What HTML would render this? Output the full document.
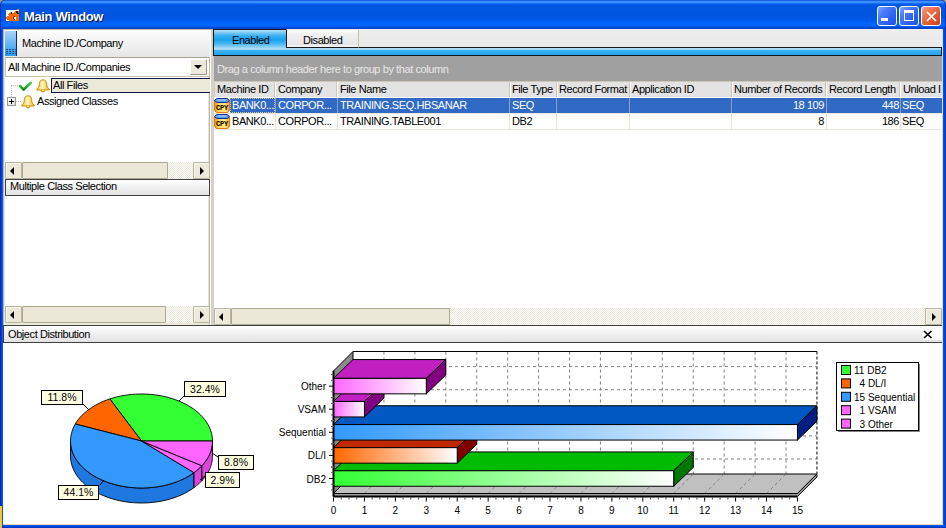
<!DOCTYPE html>
<html><head><meta charset="utf-8">
<style>
*{box-sizing:border-box;margin:0;padding:0}
html,body{width:946px;height:528px;overflow:hidden;background:#0050E0;font-family:"Liberation Sans",sans-serif;font-size:11px;color:#000}
.a{position:absolute}
.t{position:absolute;white-space:nowrap;letter-spacing:-0.42px;line-height:13px}
.sbb{position:absolute;top:0;width:17px;height:17px;background:#ECE9D8;border:1px solid #B9B49E;border-radius:1px;box-shadow:inset 1px 1px 0 #F8F6EE}
.hatch{position:absolute;top:0;height:17px;background:repeating-conic-gradient(#FDFDFA 0 25%,#EAE8DD 0 50%) 0 0/2px 2px}
.thumb{position:absolute;top:0;height:17px;background:#EBE8D8;border:1px solid #ADA890;border-radius:1px}
.tl{position:absolute;width:0;height:0;border-top:4px solid transparent;border-bottom:4px solid transparent;border-right:4px solid #000}
.tr{position:absolute;width:0;height:0;border-top:4px solid transparent;border-bottom:4px solid transparent;border-left:4px solid #000}
.hdr{position:absolute;background:linear-gradient(#FFFFFF,#F3F3F3 40%,#E2E2E2);border:1px solid #404040}
.col{position:absolute;top:0;height:15px;width:2px;border-left:1px solid #C9C7BA;border-right:1px solid #fff}
.grid{position:absolute;width:1px;background:rgba(215,208,175,0.55)}
.wb{position:absolute;top:6px;width:21px;height:21px;border:1px solid #fff;border-radius:3px}
</style></head><body>
<!-- ============ TITLE BAR ============ -->
<div class="a" style="left:0;top:0;width:946px;height:6px;background:#A39A7C"></div>
<div class="a" style="left:0;top:0;width:946px;height:29px;border-radius:5px 5px 0 0;box-shadow:inset 1px 0 #0030C0,inset -1px 0 #0030C0;background:linear-gradient(#0A3FD0 0px,#2E7EF8 1px,#3E9AFF 1.8px,#3A92FF 2.5px,#0A64F0 3.8px,#0056E2 5px,#0055E0 16px,#005AEA 20px,#0064FC 23px,#0066FF 26px,#0050E0 27px,#003CC8 29px)"></div>

<!-- icon -->
<svg class="a" style="left:6px;top:9px" width="13" height="12" viewBox="0 0 13 12" shape-rendering="crispEdges"><rect x="0" y="1" width="13" height="11" fill="#fff"/><rect x="11" y="0" width="2" height="1" fill="#FF7A20"/><rect x="9" y="2" width="1" height="1" fill="#FF6A00"/><rect x="10" y="2" width="1" height="1" fill="#1A1A1A"/><rect x="11" y="2" width="1" height="1" fill="#1A1A1A"/><rect x="12" y="2" width="1" height="1" fill="#FF6A00"/><rect x="4" y="3" width="1" height="1" fill="#FF6A00"/><rect x="5" y="3" width="1" height="1" fill="#1A1A1A"/><rect x="8" y="3" width="1" height="1" fill="#FF6A00"/><rect x="9" y="3" width="1" height="1" fill="#FF6A00"/><rect x="10" y="3" width="1" height="1" fill="#1A1A1A"/><rect x="11" y="3" width="1" height="1" fill="#1A1A1A"/><rect x="12" y="3" width="1" height="1" fill="#FF6A00"/><rect x="3" y="4" width="1" height="1" fill="#FF6A00"/><rect x="4" y="4" width="1" height="1" fill="#FF6A00"/><rect x="5" y="4" width="1" height="1" fill="#1A1A1A"/><rect x="6" y="4" width="1" height="1" fill="#FF6A00"/><rect x="7" y="4" width="1" height="1" fill="#FF6A00"/><rect x="8" y="4" width="1" height="1" fill="#FF6A00"/><rect x="9" y="4" width="1" height="1" fill="#FF6A00"/><rect x="10" y="4" width="1" height="1" fill="#FF6A00"/><rect x="11" y="4" width="1" height="1" fill="#1A1A1A"/><rect x="12" y="4" width="1" height="1" fill="#1A1A1A"/><rect x="2" y="5" width="1" height="1" fill="#FF6A00"/><rect x="3" y="5" width="1" height="1" fill="#FF6A00"/><rect x="4" y="5" width="1" height="1" fill="#FF6A00"/><rect x="5" y="5" width="1" height="1" fill="#FF6A00"/><rect x="6" y="5" width="1" height="1" fill="#FF6A00"/><rect x="7" y="5" width="1" height="1" fill="#FF6A00"/><rect x="8" y="5" width="1" height="1" fill="#FF6A00"/><rect x="9" y="5" width="1" height="1" fill="#FF6A00"/><rect x="10" y="5" width="1" height="1" fill="#FF6A00"/><rect x="11" y="5" width="1" height="1" fill="#FF6A00"/><rect x="12" y="5" width="1" height="1" fill="#FF6A00"/><rect x="3" y="6" width="1" height="1" fill="#FF6A00"/><rect x="4" y="6" width="1" height="1" fill="#FF6A00"/><rect x="5" y="6" width="1" height="1" fill="#FF6A00"/><rect x="6" y="6" width="1" height="1" fill="#FF6A00"/><rect x="7" y="6" width="1" height="1" fill="#FF6A00"/><rect x="8" y="6" width="1" height="1" fill="#FF6A00"/><rect x="9" y="6" width="1" height="1" fill="#FF6A00"/><rect x="10" y="6" width="1" height="1" fill="#FF6A00"/><rect x="11" y="6" width="1" height="1" fill="#FF6A00"/><rect x="12" y="6" width="1" height="1" fill="#FF6A00"/><rect x="1" y="7" width="1" height="1" fill="#FF6A00"/><rect x="2" y="7" width="1" height="1" fill="#FF6A00"/><rect x="3" y="7" width="1" height="1" fill="#FF6A00"/><rect x="4" y="7" width="1" height="1" fill="#FF6A00"/><rect x="5" y="7" width="1" height="1" fill="#FF6A00"/><rect x="6" y="7" width="1" height="1" fill="#FF6A00"/><rect x="7" y="7" width="1" height="1" fill="#FF6A00"/><rect x="8" y="7" width="1" height="1" fill="#1A1A1A"/><rect x="9" y="7" width="1" height="1" fill="#FF6A00"/><rect x="10" y="7" width="1" height="1" fill="#FF6A00"/><rect x="11" y="7" width="1" height="1" fill="#FF6A00"/><rect x="12" y="7" width="1" height="1" fill="#FF6A00"/><rect x="0" y="8" width="1" height="1" fill="#FF6A00"/><rect x="1" y="8" width="1" height="1" fill="#FF6A00"/><rect x="2" y="8" width="1" height="1" fill="#FF6A00"/><rect x="3" y="8" width="1" height="1" fill="#FF6A00"/><rect x="4" y="8" width="1" height="1" fill="#FF6A00"/><rect x="5" y="8" width="1" height="1" fill="#FF6A00"/><rect x="6" y="8" width="1" height="1" fill="#FF6A00"/><rect x="7" y="8" width="1" height="1" fill="#1A1A1A"/><rect x="10" y="8" width="1" height="1" fill="#FF6A00"/><rect x="11" y="8" width="1" height="1" fill="#FF6A00"/><rect x="12" y="8" width="1" height="1" fill="#FF6A00"/><rect x="0" y="9" width="1" height="1" fill="#FF6A00"/><rect x="1" y="9" width="1" height="1" fill="#FF6A00"/><rect x="2" y="9" width="1" height="1" fill="#FF6A00"/><rect x="3" y="9" width="1" height="1" fill="#FF6A00"/><rect x="4" y="9" width="1" height="1" fill="#FF6A00"/><rect x="5" y="9" width="1" height="1" fill="#FF6A00"/><rect x="6" y="9" width="1" height="1" fill="#FF6A00"/><rect x="7" y="9" width="1" height="1" fill="#1A1A1A"/><rect x="10" y="9" width="1" height="1" fill="#FF6A00"/><rect x="11" y="9" width="1" height="1" fill="#FF6A00"/><rect x="12" y="9" width="1" height="1" fill="#FF6A00"/><rect x="1" y="10" width="1" height="1" fill="#FF6A00"/><rect x="2" y="10" width="1" height="1" fill="#FF6A00"/><rect x="3" y="10" width="1" height="1" fill="#FF6A00"/><rect x="4" y="10" width="1" height="1" fill="#FF6A00"/><rect x="5" y="10" width="1" height="1" fill="#FF6A00"/><rect x="6" y="10" width="1" height="1" fill="#FF6A00"/><rect x="7" y="10" width="1" height="1" fill="#FF6A00"/><rect x="8" y="10" width="1" height="1" fill="#1A1A1A"/><rect x="10" y="10" width="1" height="1" fill="#FF6A00"/><rect x="11" y="10" width="1" height="1" fill="#FF6A00"/><rect x="12" y="10" width="1" height="1" fill="#FF6A00"/><rect x="3" y="11" width="1" height="1" fill="#FF6A00"/><rect x="4" y="11" width="1" height="1" fill="#FF6A00"/><rect x="5" y="11" width="1" height="1" fill="#FF6A00"/><rect x="6" y="11" width="1" height="1" fill="#FF6A00"/><rect x="7" y="11" width="1" height="1" fill="#FF6A00"/><rect x="8" y="11" width="1" height="1" fill="#FF6A00"/><rect x="9" y="11" width="1" height="1" fill="#FF6A00"/><rect x="10" y="11" width="1" height="1" fill="#FF6A00"/><rect x="11" y="11" width="1" height="1" fill="#FF6A00"/><rect x="12" y="11" width="1" height="1" fill="#FF6A00"/></svg>
<div class="t" style="left:24px;top:8px;font-weight:bold;font-size:13px;letter-spacing:-0.35px;color:#000A40;line-height:15px;left:25px;top:10px">Main Window</div>
<div class="t" style="left:24px;top:8px;font-weight:bold;font-size:13px;letter-spacing:-0.35px;color:#fff;line-height:15px;top:9px">Main Window</div>
<!-- window buttons -->
<div class="wb" style="left:877px;width:20px;height:20px;background:linear-gradient(135deg,#7FA6FF 0,#4A7CF8 30%,#2E62F0 65%,#2254E0 100%)"><div class="a" style="left:3px;top:11px;width:7px;height:3px;background:#fff"></div></div>
<div class="wb" style="left:899px;width:20px;height:20px;background:linear-gradient(135deg,#7FA6FF 0,#4A7CF8 30%,#2E62F0 65%,#2254E0 100%)"><div class="a" style="left:4px;top:3px;width:10px;height:11px;border:1px solid #fff;border-top-width:3px"></div></div>
<div class="wb" style="left:921px;width:20px;height:20px;background:linear-gradient(135deg,#F4A080 0,#EC7A56 30%,#E2582E 65%,#CC4010 100%)">
<svg class="a" style="left:4px;top:4px" width="11" height="11" viewBox="0 0 11 11"><path d="M1 1 L10 10 M10 1 L1 10" stroke="#fff" stroke-width="1.7"/></svg></div>

<!-- ============ FRAME ============ -->
<div class="a" style="left:0;top:29px;width:946px;height:499px;background:linear-gradient(90deg,#0020B0 0,#0030C8 1px,#0060FF 2.5px,#0058F4 6px,#0058F4 943px,#0050F0 944px,#0030C0 946px);"></div>
<div class="a" style="left:0;top:525px;width:946px;height:3px;background:linear-gradient(#0058F4 0,#0050EC 1px,#0030B8 3px)"></div>
<div class="a" style="left:3px;top:29px;width:940px;height:496px;background:#ECE9D8;border-top:1px solid #C5BA98;border-left:1px solid #C0B48F;border-right:1px solid #E8D8B0;border-bottom:1px solid #E8D8B0"></div>
<div class="a" style="left:0;top:506px;width:2px;height:22px;background:linear-gradient(90deg,#FFD030,#F0B820)"></div>

<!-- ============ LEFT PANEL ============ -->
<div class="a" style="left:208px;top:30px;width:1px;height:295px;background:#E6E4DA"></div><div class="a" style="left:209px;top:30px;width:1px;height:295px;background:#BDB9A5"></div><div class="a" style="left:210px;top:30px;width:1px;height:295px;background:#FFFEF4"></div><div class="a" style="left:211px;top:30px;width:3px;height:295px;background:#D4D1C8"></div><div class="a" style="left:214px;top:97px;width:1px;height:211px;background:#D0CEC8"></div>
<!-- header Machine ID./Company -->
<div class="a" style="left:5px;top:30px;width:205px;height:27px;background:linear-gradient(#FDFDFD,#F4F4F4 40%,#E6E6E6)"></div>
<div class="a" style="left:5px;top:31px;width:12px;height:25px;background:linear-gradient(#A9D3FA,#5AB2F4 60%,#2A9CF0);border-right:1px solid #1B2B4B"></div>
<div class="a" style="left:6px;top:49px;width:10px;height:1px;background:repeating-linear-gradient(90deg,#1E4A86 0 2px,transparent 2px 3px)"></div>
<div class="a" style="left:6px;top:51px;width:10px;height:1px;background:repeating-linear-gradient(90deg,#1E4A86 0 2px,transparent 2px 3px)"></div>
<div class="a" style="left:6px;top:53px;width:10px;height:1px;background:repeating-linear-gradient(90deg,#1E4A86 0 2px,transparent 2px 3px)"></div>
<div class="t" style="left:22px;top:37px">Machine ID./Company</div>
<!-- combo -->
<div class="a" style="left:5px;top:57px;width:204px;height:20px;background:#fff;border:1px solid #C9C3A8;border-top-color:#A5A18D;border-right:none"></div>
<div class="t" style="left:8px;top:61px">All Machine ID./Companies</div>
<div class="a" style="left:190px;top:59px;width:17px;height:16px;background:#ECE9D8;border:1px solid #fff;border-right-color:#9D9A87;border-bottom-color:#9D9A87"></div>
<div class="a" style="left:194px;top:65px;width:0;height:0;border-left:4px solid transparent;border-right:4px solid transparent;border-top:4px solid #000"></div>
<!-- tree area -->
<div class="a" style="left:5px;top:77px;width:203px;height:85px;background:#fff"></div>
<div class="a" style="left:51px;top:78px;width:159px;height:15px;background:#ECE9D8;border:1px solid #0B1A48;border-right:none"></div>
<div class="t" style="left:53px;top:79px">All Files</div>
<div class="t" style="left:37px;top:95px">Assigned Classes</div>
<!-- tree dotted lines -->
<div class="a" style="left:11px;top:85px;width:1px;height:12px;border-left:1px dotted #C0C0C0"></div>
<div class="a" style="left:11px;top:85px;width:7px;height:1px;border-top:1px dotted #C0C0C0"></div>
<div class="a" style="left:16px;top:101px;width:5px;height:1px;border-top:1px dotted #C0C0C0"></div>
<!-- plus box -->
<div class="a" style="left:7px;top:97px;width:9px;height:9px;border:1px solid #919B9C;background:linear-gradient(135deg,#fff,#E0DDD0)"></div>
<div class="a" style="left:9px;top:101px;width:5px;height:1px;background:#000"></div>
<div class="a" style="left:11px;top:99px;width:1px;height:5px;background:#000"></div>
<!-- check -->
<svg class="a" style="left:19px;top:82px" width="13" height="9" viewBox="0 0 13 9"><defs><linearGradient id="cg" x1="0" y1="0" x2="0" y2="1"><stop offset="0" stop-color="#40D040"/><stop offset="1" stop-color="#109010"/></linearGradient></defs><path d="M1.2 4.2 L4.6 7.6 L11.6 0.8" stroke="url(#cg)" stroke-width="2.6" fill="none" stroke-linecap="round"/></svg>
<!-- bells -->
<svg class="a" style="left:36px;top:79px" width="14" height="14" viewBox="0 0 14 14"><defs><linearGradient id="bg1" x1="0" x2="1"><stop offset="0" stop-color="#F4C22A"/><stop offset=".45" stop-color="#FFF6C0"/><stop offset="1" stop-color="#F0B818"/></linearGradient></defs><path d="M7 0.8 C4 0.8 3.4 3 3.3 5.5 C3.2 8 2.2 9 0.8 10 L0.8 11 L13.2 11 L13.2 10 C11.8 9 10.8 8 10.7 5.5 C10.6 3 10 0.8 7 0.8 Z" fill="url(#bg1)" stroke="#D08A00" stroke-width="1"/><path d="M5.3 11.3 A1.7 1.7 0 0 0 8.7 11.3" fill="#FFE060" stroke="#D08A00" stroke-width="1"/></svg>
<svg class="a" style="left:21px;top:95px" width="14" height="14" viewBox="0 0 14 14"><defs><linearGradient id="bg2" x1="0" x2="1"><stop offset="0" stop-color="#F4C22A"/><stop offset=".45" stop-color="#FFF6C0"/><stop offset="1" stop-color="#F0B818"/></linearGradient></defs><path d="M7 0.8 C4 0.8 3.4 3 3.3 5.5 C3.2 8 2.2 9 0.8 10 L0.8 11 L13.2 11 L13.2 10 C11.8 9 10.8 8 10.7 5.5 C10.6 3 10 0.8 7 0.8 Z" fill="url(#bg2)" stroke="#D08A00" stroke-width="1"/><path d="M5.3 11.3 A1.7 1.7 0 0 0 8.7 11.3" fill="#FFE060" stroke="#D08A00" stroke-width="1"/></svg>
<!-- scrollbar 1 -->
<div class="a" style="left:5px;top:162px;width:205px;height:17px">
 <div class="sbb" style="left:0"><div class="tl" style="left:4px;top:4px"></div></div>
 <div class="thumb" style="left:17px;width:146px"></div>
 <div class="hatch" style="left:163px;width:25px"></div>
 <div class="sbb" style="left:188px"><div class="tr" style="left:6px;top:4px"></div></div>
</div>
<!-- Multiple Class Selection header -->
<div class="hdr" style="left:5px;top:179px;width:205px;height:17px"></div>
<div class="t" style="left:10px;top:180px">Multiple Class Selection</div>
<div class="a" style="left:5px;top:196px;width:203px;height:110px;background:#fff"></div>
<!-- scrollbar 2 -->
<div class="a" style="left:5px;top:306px;width:205px;height:17px">
 <div class="sbb" style="left:0"><div class="tl" style="left:4px;top:4px"></div></div>
 <div class="thumb" style="left:17px;width:144px"></div>
 <div class="hatch" style="left:161px;width:27px"></div>
 <div class="sbb" style="left:188px"><div class="tr" style="left:6px;top:4px"></div></div>
</div>
<!-- splitter -->


<!-- ============ RIGHT PANEL ============ -->
<!-- tabs -->
<div class="a" style="left:214px;top:29px;width:728px;height:18px;background:linear-gradient(#F6F4EA 0,#F6F4EA 1px,#ECECEC 1px,#E9E9E9)"></div>
<div class="a" style="left:213px;top:29px;width:73px;height:19px;border-top:1px solid #1A1A1A;border-left:1px solid #1A1A1A;background:linear-gradient(#B2DEFA 0,#8CCFF7 2px,#35AEF0 6px,#1AA0EC 10px,#4DB8F2 14px,#8ACFF6 17px,#B8E0FA 19px)"></div>
<div class="a" style="left:286px;top:29px;width:73px;height:19px;background:linear-gradient(#FFFFFF,#F2F2F2 20%,#E6E6E6 85%,#FAFAFA);border-left:1px solid #1A1A1A;border-right:1px solid #C8C0A8;border-bottom:1px solid #1A1A1A;border-top:1px solid #F0ECDC"></div>
<div class="a" style="left:359px;top:47px;width:583px;height:1px;background:#1A1A1A"></div>
<div class="t" style="left:232px;top:34px">Enabled</div>
<div class="t" style="left:303px;top:34px">Disabled</div>
<div class="a" style="left:213px;top:48px;width:729px;height:8px;background:linear-gradient(#B8E0FA 0,#9AD6F8 1.5px,#3DB2F0 2.5px,#22A6EE 7px);border-bottom:1px solid #1A1A1A;border-left:1px solid #1A1A1A;border-right:1px solid #1A1A1A"></div>
<!-- group by area -->
<div class="a" style="left:214px;top:56px;width:728px;height:26px;background:#A0A0A0"></div>
<div class="t" style="left:217px;top:63px;color:#E8E8E8">Drag a column header here to group by that column</div>
<!-- column headers -->
<div class="a" style="left:214px;top:81px;width:728px;height:17px;background:#E3E3E3;border-top:1px solid #CFC8B0;border-bottom:1px solid #E0DAC8;border-left:1px solid #D4CEB8"></div>
<div class="a" style="left:214px;top:82px;width:728px;height:15px">
 <div class="col" style="left:60px"></div><div class="col" style="left:122px"></div><div class="col" style="left:295px"></div>
 <div class="col" style="left:342px"></div><div class="col" style="left:415px"></div><div class="col" style="left:517px"></div>
 <div class="col" style="left:611px"></div><div class="col" style="left:685px"></div>
</div>
<div class="t" style="left:217px;top:83px">Machine ID</div>
<div class="t" style="left:278px;top:83px">Company</div>
<div class="t" style="left:340px;top:83px">File Name</div>
<div class="t" style="left:512px;top:83px">File Type</div>
<div class="t" style="left:559px;top:83px">Record Format</div>
<div class="t" style="left:632px;top:83px">Application ID</div>
<div class="t" style="left:734px;top:83px">Number of Records</div>
<div class="t" style="left:829px;top:83px">Record Length</div>
<div class="t" style="left:903px;top:83px">Unload I</div>
<!-- rows -->
<div class="a" style="left:214px;top:97px;width:728px;height:211px;background:#fff"></div>
<div class="a" style="left:230px;top:98px;width:712px;height:15px;background:#316AC5"></div>
<div class="a" style="left:230px;top:98px;width:45px;height:15px;border:1px dotted #D7C98A"></div>
<div class="a" style="left:214px;top:129px;width:728px;height:1px;background:#EAE8DC"></div>
<div class="grid" style="left:275px;top:97px;height:33px"></div>
<div class="grid" style="left:337px;top:97px;height:33px"></div>
<div class="grid" style="left:509px;top:97px;height:33px"></div>
<div class="grid" style="left:556px;top:97px;height:33px"></div>
<div class="grid" style="left:629px;top:97px;height:33px"></div>
<div class="grid" style="left:731px;top:97px;height:33px"></div>
<div class="grid" style="left:826px;top:97px;height:33px"></div>
<div class="grid" style="left:900px;top:97px;height:33px"></div>
<div class="a" style="left:214px;top:113px;width:728px;height:1px;background:#EAE8DC"></div>
<div class="t" style="left:232px;top:99px;color:#fff">BANK0...</div>
<div class="t" style="left:278px;top:99px;color:#fff">CORPOR...</div>
<div class="t" style="left:340px;top:99px;color:#fff">TRAINING.SEQ.HBSANAR</div>
<div class="t" style="left:512px;top:99px;color:#fff">SEQ</div>
<div class="t" style="left:723px;width:101px;text-align:right;top:99px;color:#fff">18 109</div>
<div class="t" style="left:820px;width:79px;text-align:right;top:99px;color:#fff">448</div>
<div class="t" style="left:902px;top:99px;color:#fff">SEQ</div>
<div class="t" style="left:232px;top:115px">BANK0...</div>
<div class="t" style="left:278px;top:115px">CORPOR...</div>
<div class="t" style="left:340px;top:115px">TRAINING.TABLE001</div>
<div class="t" style="left:512px;top:115px">DB2</div>
<div class="t" style="left:723px;width:101px;text-align:right;top:115px">8</div>
<div class="t" style="left:820px;width:79px;text-align:right;top:115px">186</div>
<div class="t" style="left:902px;top:115px">SEQ</div>
<!-- CPY icons -->
<svg class="a" style="left:214px;top:98px" width="16" height="15" viewBox="0 0 17 15" preserveAspectRatio="none"><defs><linearGradient id="ic1" x1="0" x2="1"><stop offset="0" stop-color="#F08A10"/><stop offset=".3" stop-color="#FFD860"/><stop offset=".7" stop-color="#FFE890"/><stop offset="1" stop-color="#F09A20"/></linearGradient></defs><path d="M0.5 3 L0.5 12 L2.5 14.5 L14.5 14.5 L16.5 12 L16.5 3 Z" fill="url(#ic1)" stroke="#E07800" stroke-width="1"/><path d="M0.5 2.5 L3 0.5 L14 0.5 L16.5 2.5 L14 4.5 L3 4.5 Z" fill="#5A9AF4" stroke="#0A2A9A" stroke-width="1"/><path d="M4 2 L13 2" stroke="#A8D0FF" stroke-width="1.2"/><text x="8.5" y="11.6" font-size="7.5" font-weight="bold" text-anchor="middle" font-family="Liberation Mono" letter-spacing="-0.3">CPY</text></svg>
<svg class="a" style="left:214px;top:114px" width="16" height="15" viewBox="0 0 17 15" preserveAspectRatio="none"><defs><linearGradient id="ic2" x1="0" x2="1"><stop offset="0" stop-color="#F08A10"/><stop offset=".3" stop-color="#FFD860"/><stop offset=".7" stop-color="#FFE890"/><stop offset="1" stop-color="#F09A20"/></linearGradient></defs><path d="M0.5 3 L0.5 12 L2.5 14.5 L14.5 14.5 L16.5 12 L16.5 3 Z" fill="url(#ic2)" stroke="#E07800" stroke-width="1"/><path d="M0.5 2.5 L3 0.5 L14 0.5 L16.5 2.5 L14 4.5 L3 4.5 Z" fill="#5A9AF4" stroke="#0A2A9A" stroke-width="1"/><path d="M4 2 L13 2" stroke="#A8D0FF" stroke-width="1.2"/><text x="8.5" y="11.6" font-size="7.5" font-weight="bold" text-anchor="middle" font-family="Liberation Mono" letter-spacing="-0.3">CPY</text></svg>
<!-- right scrollbar -->
<div class="a" style="left:214px;top:308px;width:728px;height:17px">
 <div class="sbb" style="left:0"><div class="tl" style="left:4px;top:4px"></div></div>
 <div class="thumb" style="left:17px;width:219px"></div>
 <div class="hatch" style="left:236px;width:475px"></div>
 <div class="sbb" style="left:711px"><div class="tr" style="left:6px;top:4px"></div></div>
</div>

<!-- ============ OBJECT DISTRIBUTION ============ -->
<div class="hdr" style="left:3px;top:325px;width:939px;height:18px;border-right:none"></div>
<div class="t" style="left:8px;top:328px">Object Distribution</div>
<div class="a" style="left:923px;top:327px;width:19px;height:13px;background:#fff"></div>
<svg class="a" style="left:923px;top:330px" width="10" height="9" viewBox="0 0 10 9"><path d="M1 1 L8.5 8 M8.5 1 L1 8" stroke="#000" stroke-width="1.7"/></svg>
<div class="a" style="left:3px;top:343px;width:939px;height:181px;background:#fff"></div>
<!-- CHART -->
<svg class="a" style="left:0;top:0" width="946" height="528" viewBox="0 0 946 528"><defs><linearGradient id="g0" x1="0" y1="0" x2="1" y2="0"><stop offset="0" stop-color="#33FF33"/><stop offset="1" stop-color="#fff"/></linearGradient><linearGradient id="g1" x1="0" y1="0" x2="1" y2="0"><stop offset="0" stop-color="#FF6600"/><stop offset="1" stop-color="#fff"/></linearGradient><linearGradient id="g2" x1="0" y1="0" x2="1" y2="0"><stop offset="0" stop-color="#3399FF"/><stop offset="1" stop-color="#fff"/></linearGradient><linearGradient id="g3" x1="0" y1="0" x2="1" y2="0"><stop offset="0" stop-color="#FF66FF"/><stop offset="1" stop-color="#fff"/></linearGradient><linearGradient id="g4" x1="0" y1="0" x2="1" y2="0"><stop offset="0" stop-color="#FF66FF"/><stop offset="1" stop-color="#fff"/></linearGradient></defs><path d="M70.50,441.00 L70.63,443.82 L71.01,446.63 L71.65,449.42 L72.54,452.18 L73.68,454.90 L75.06,457.57 L76.68,460.18 L78.54,462.72 L80.62,465.19 L82.93,467.56 L85.44,469.84 L88.16,472.02 L91.06,474.08 L94.15,476.02 L97.42,477.84 L100.84,479.53 L104.40,481.07 L108.10,482.48 L111.92,483.73 L115.85,484.83 L119.87,485.77 L123.97,486.54 L128.13,487.16 L132.34,487.61 L136.58,487.89 L140.84,488.00 L145.11,487.94 L149.36,487.71 L153.58,487.31 L157.76,486.75 L161.87,486.02 L165.92,485.13 L169.88,484.08 L173.73,482.88 L177.47,481.52 L181.08,480.02 L184.55,478.38 L187.86,476.60 L191.00,474.69 L193.97,472.66 L193.97,487.66 L191.00,489.69 L187.86,491.60 L184.55,493.38 L181.08,495.02 L177.47,496.52 L173.73,497.88 L169.88,499.08 L165.92,500.13 L161.87,501.02 L157.76,501.75 L153.58,502.31 L149.36,502.71 L145.11,502.94 L140.84,503.00 L136.58,502.89 L132.34,502.61 L128.13,502.16 L123.97,501.54 L119.87,500.77 L115.85,499.83 L111.92,498.73 L108.10,497.48 L104.40,496.07 L100.84,494.53 L97.42,492.84 L94.15,491.02 L91.06,489.08 L88.16,487.02 L85.44,484.84 L82.93,482.56 L80.62,480.19 L78.54,477.72 L76.68,475.18 L75.06,472.57 L73.68,469.90 L72.54,467.18 L71.65,464.42 L71.01,461.63 L70.63,458.82 L70.50,456.00Z" fill="#1E78E0" stroke="#000" stroke-width="0.9" stroke-linejoin="round"/>
<path d="M193.97,472.66 L194.19,472.50 L194.41,472.34 L194.63,472.18 L194.84,472.02 L195.06,471.85 L195.28,471.69 L195.49,471.52 L195.70,471.36 L195.91,471.19 L196.12,471.03 L196.33,470.86 L196.54,470.69 L196.75,470.52 L196.95,470.35 L197.16,470.18 L197.36,470.01 L197.56,469.84 L197.76,469.67 L197.96,469.50 L198.16,469.32 L198.36,469.15 L198.55,468.98 L198.75,468.80 L198.94,468.63 L199.13,468.45 L199.32,468.27 L199.51,468.10 L199.70,467.92 L199.89,467.74 L200.07,467.56 L200.26,467.38 L200.44,467.20 L200.63,467.02 L200.81,466.84 L200.99,466.66 L201.16,466.48 L201.34,466.29 L201.52,466.11 L201.69,465.93 L201.87,465.74 L201.87,480.74 L201.69,480.93 L201.52,481.11 L201.34,481.29 L201.16,481.48 L200.99,481.66 L200.81,481.84 L200.63,482.02 L200.44,482.20 L200.26,482.38 L200.07,482.56 L199.89,482.74 L199.70,482.92 L199.51,483.10 L199.32,483.27 L199.13,483.45 L198.94,483.63 L198.75,483.80 L198.55,483.98 L198.36,484.15 L198.16,484.32 L197.96,484.50 L197.76,484.67 L197.56,484.84 L197.36,485.01 L197.16,485.18 L196.95,485.35 L196.75,485.52 L196.54,485.69 L196.33,485.86 L196.12,486.03 L195.91,486.19 L195.70,486.36 L195.49,486.52 L195.28,486.69 L195.06,486.85 L194.84,487.02 L194.63,487.18 L194.41,487.34 L194.19,487.50 L193.97,487.66Z" fill="#DD44DD" stroke="#000" stroke-width="0.9" stroke-linejoin="round"/>
<path d="M201.87,465.74 L202.38,465.19 L202.88,464.63 L203.37,464.06 L203.84,463.49 L204.31,462.92 L204.76,462.34 L205.20,461.76 L205.63,461.17 L206.05,460.58 L206.45,459.98 L206.84,459.39 L207.22,458.79 L207.59,458.18 L207.94,457.57 L208.28,456.96 L208.61,456.35 L208.92,455.73 L209.22,455.11 L209.51,454.49 L209.79,453.86 L210.05,453.23 L210.30,452.60 L210.54,451.97 L210.76,451.34 L210.97,450.70 L211.17,450.06 L211.35,449.42 L211.52,448.78 L211.68,448.14 L211.82,447.49 L211.95,446.85 L212.06,446.20 L212.17,445.55 L212.25,444.90 L212.33,444.25 L212.39,443.60 L212.44,442.95 L212.47,442.30 L212.49,441.65 L212.50,441.00 L212.50,456.00 L212.49,456.65 L212.47,457.30 L212.44,457.95 L212.39,458.60 L212.33,459.25 L212.25,459.90 L212.17,460.55 L212.06,461.20 L211.95,461.85 L211.82,462.49 L211.68,463.14 L211.52,463.78 L211.35,464.42 L211.17,465.06 L210.97,465.70 L210.76,466.34 L210.54,466.97 L210.30,467.60 L210.05,468.23 L209.79,468.86 L209.51,469.49 L209.22,470.11 L208.92,470.73 L208.61,471.35 L208.28,471.96 L207.94,472.57 L207.59,473.18 L207.22,473.79 L206.84,474.39 L206.45,474.98 L206.05,475.58 L205.63,476.17 L205.20,476.76 L204.76,477.34 L204.31,477.92 L203.84,478.49 L203.37,479.06 L202.88,479.63 L202.38,480.19 L201.87,480.74Z" fill="#DD44DD" stroke="#000" stroke-width="0.9" stroke-linejoin="round"/>
<path d="M141.5,441 L212.50,441.00 L212.40,438.49 L212.09,435.98 L211.59,433.49 L210.88,431.02 L209.98,428.58 L208.87,426.17 L207.58,423.81 L206.10,421.49 L204.43,419.24 L202.58,417.04 L200.56,414.91 L198.37,412.86 L196.01,410.89 L193.50,409.00 L190.84,407.21 L188.04,405.51 L185.11,403.91 L182.05,402.42 L178.88,401.04 L175.60,399.77 L172.22,398.63 L168.75,397.60 L165.21,396.70 L161.59,395.92 L157.92,395.27 L154.21,394.76 L150.45,394.38 L146.67,394.12 L142.88,394.01 L139.08,394.03 L135.29,394.18 L131.52,394.47 L127.78,394.89 L124.07,395.44 L120.42,396.12 L116.82,396.93 L113.30,397.87 L109.85,398.93Z" fill="#33FF33" stroke="#000" stroke-width="0.9" stroke-linejoin="round"/>
<path d="M141.5,441 L109.85,398.93 L106.54,400.09 L103.33,401.37 L100.22,402.76 L97.23,404.25 L94.36,405.85 L91.63,407.55 L89.03,409.34 L86.58,411.21 L84.28,413.17 L82.14,415.21 L80.17,417.32 L78.37,419.50 L76.74,421.73 L75.29,424.02Z" fill="#FF6600" stroke="#000" stroke-width="0.9" stroke-linejoin="round"/>
<path d="M141.5,441 L75.29,424.02 L74.02,426.38 L72.94,428.78 L72.06,431.22 L71.37,433.68 L70.88,436.16 L70.59,438.66 L70.50,441.17 L70.61,443.67 L70.93,446.17 L71.45,448.65 L72.16,451.11 L73.07,453.54 L74.18,455.94 L75.48,458.29 L76.96,460.59 L78.63,462.84 L80.48,465.03 L82.50,467.15 L84.69,469.19 L87.04,471.15 L89.54,473.03 L92.20,474.82 L94.99,476.51 L97.91,478.10 L100.96,479.59 L104.12,480.96 L107.39,482.22 L110.76,483.37 L114.21,484.39 L117.74,485.29 L121.34,486.07 L125.00,486.71 L128.70,487.23 L132.44,487.62 L136.21,487.87 L139.99,487.99 L143.77,487.98 L147.55,487.83 L151.31,487.55 L155.04,487.14 L158.74,486.59 L162.38,485.92 L165.97,485.12 L169.48,484.20 L172.92,483.15 L176.27,481.98 L179.52,480.69 L182.66,479.30 L185.68,477.79 L188.58,476.18 L191.35,474.47 L193.97,472.66Z" fill="#3399FF" stroke="#000" stroke-width="0.9" stroke-linejoin="round"/>
<path d="M141.5,441 L193.97,472.66 L196.12,471.03 L198.16,469.32 L200.07,467.56 L201.87,465.74Z" fill="#FF66FF" stroke="#000" stroke-width="0.9" stroke-linejoin="round"/>
<path d="M141.5,441 L201.87,465.74 L203.84,463.49 L205.63,461.17 L207.22,458.79 L208.61,456.35 L209.79,453.86 L210.76,451.34 L211.52,448.78 L212.06,446.20 L212.39,443.60 L212.50,441.00Z" fill="#FF66FF" stroke="#000" stroke-width="0.9" stroke-linejoin="round"/>
<line x1="83" y1="404" x2="89" y2="410" stroke="#000" stroke-width="1"/>
<rect x="41.5" y="390.5" width="41" height="14" fill="#FFFFE1" stroke="#000" stroke-width="1"/>
<text x="62.0" y="401" font-size="10.5" text-anchor="middle" font-family="Liberation Sans">11.8%</text>
<line x1="184" y1="396" x2="179" y2="401" stroke="#000" stroke-width="1"/>
<rect x="184.5" y="381.5" width="41" height="15" fill="#FFFFE1" stroke="#000" stroke-width="1"/>
<text x="205.0" y="393" font-size="10.5" text-anchor="middle" font-family="Liberation Sans">32.4%</text>
<line x1="212" y1="453" x2="218" y2="457" stroke="#000" stroke-width="1"/>
<rect x="218.5" y="455.5" width="35" height="14" fill="#FFFFE1" stroke="#000" stroke-width="1"/>
<text x="236.0" y="466" font-size="10.5" text-anchor="middle" font-family="Liberation Sans">8.8%</text>
<line x1="200" y1="480" x2="205" y2="476" stroke="#000" stroke-width="1"/>
<rect x="205.5" y="472.5" width="34" height="15" fill="#FFFFE1" stroke="#000" stroke-width="1"/>
<text x="222.5" y="484" font-size="10.5" text-anchor="middle" font-family="Liberation Sans">2.9%</text>
<line x1="100" y1="485" x2="104" y2="480" stroke="#000" stroke-width="1"/>
<rect x="58.5" y="485.5" width="40" height="14" fill="#FFFFE1" stroke="#000" stroke-width="1"/>
<text x="78.5" y="496" font-size="10.5" text-anchor="middle" font-family="Liberation Sans">44.1%</text>
<rect x="353.0" y="351.5" width="463.95" height="122.5" fill="#fff"/>
<line x1="383.93" y1="351.5" x2="383.93" y2="474.0" stroke="#808080" stroke-dasharray="3,3"/>
<line x1="414.86" y1="351.5" x2="414.86" y2="474.0" stroke="#808080" stroke-dasharray="3,3"/>
<line x1="445.79" y1="351.5" x2="445.79" y2="474.0" stroke="#808080" stroke-dasharray="3,3"/>
<line x1="476.72" y1="351.5" x2="476.72" y2="474.0" stroke="#808080" stroke-dasharray="3,3"/>
<line x1="507.65" y1="351.5" x2="507.65" y2="474.0" stroke="#808080" stroke-dasharray="3,3"/>
<line x1="538.58" y1="351.5" x2="538.58" y2="474.0" stroke="#808080" stroke-dasharray="3,3"/>
<line x1="569.51" y1="351.5" x2="569.51" y2="474.0" stroke="#808080" stroke-dasharray="3,3"/>
<line x1="600.44" y1="351.5" x2="600.44" y2="474.0" stroke="#808080" stroke-dasharray="3,3"/>
<line x1="631.37" y1="351.5" x2="631.37" y2="474.0" stroke="#808080" stroke-dasharray="3,3"/>
<line x1="662.30" y1="351.5" x2="662.30" y2="474.0" stroke="#808080" stroke-dasharray="3,3"/>
<line x1="693.23" y1="351.5" x2="693.23" y2="474.0" stroke="#808080" stroke-dasharray="3,3"/>
<line x1="724.16" y1="351.5" x2="724.16" y2="474.0" stroke="#808080" stroke-dasharray="3,3"/>
<line x1="755.09" y1="351.5" x2="755.09" y2="474.0" stroke="#808080" stroke-dasharray="3,3"/>
<line x1="786.02" y1="351.5" x2="786.02" y2="474.0" stroke="#808080" stroke-dasharray="3,3"/>
<line x1="816.95" y1="351.5" x2="816.95" y2="474.0" stroke="#000" stroke-dasharray="3,2"/>
<line x1="353.0" y1="459.00" x2="816.95" y2="459.00" stroke="#808080" stroke-dasharray="3,3"/>
<line x1="353.0" y1="435.90" x2="816.95" y2="435.90" stroke="#808080" stroke-dasharray="3,3"/>
<line x1="353.0" y1="412.80" x2="816.95" y2="412.80" stroke="#808080" stroke-dasharray="3,3"/>
<line x1="353.0" y1="389.70" x2="816.95" y2="389.70" stroke="#808080" stroke-dasharray="3,3"/>
<line x1="353.0" y1="366.60" x2="816.95" y2="366.60" stroke="#808080" stroke-dasharray="3,3"/>
<line x1="353.0" y1="351.5" x2="816.95" y2="351.5" stroke="#000" stroke-width="1.2"/>
<path d="M333.5,371 L353.0,351.5 L353.0,474.0 L333.5,493.5 Z" fill="#8A8A8A" stroke="#000" stroke-width="1"/>
<path d="M333.5,493.5 L353.0,474.0 L816.95,474.0 L797.45,493.5 Z" fill="#C0C0C0" stroke="#000" stroke-width="1"/>
<line x1="364.43" y1="493.5" x2="383.93" y2="474.0" stroke="#808080" stroke-dasharray="3,3"/>
<line x1="395.36" y1="493.5" x2="414.86" y2="474.0" stroke="#808080" stroke-dasharray="3,3"/>
<line x1="426.29" y1="493.5" x2="445.79" y2="474.0" stroke="#808080" stroke-dasharray="3,3"/>
<line x1="457.22" y1="493.5" x2="476.72" y2="474.0" stroke="#808080" stroke-dasharray="3,3"/>
<line x1="488.15" y1="493.5" x2="507.65" y2="474.0" stroke="#808080" stroke-dasharray="3,3"/>
<line x1="519.08" y1="493.5" x2="538.58" y2="474.0" stroke="#808080" stroke-dasharray="3,3"/>
<line x1="550.01" y1="493.5" x2="569.51" y2="474.0" stroke="#808080" stroke-dasharray="3,3"/>
<line x1="580.94" y1="493.5" x2="600.44" y2="474.0" stroke="#808080" stroke-dasharray="3,3"/>
<line x1="611.87" y1="493.5" x2="631.37" y2="474.0" stroke="#808080" stroke-dasharray="3,3"/>
<line x1="642.80" y1="493.5" x2="662.30" y2="474.0" stroke="#808080" stroke-dasharray="3,3"/>
<line x1="673.73" y1="493.5" x2="693.23" y2="474.0" stroke="#808080" stroke-dasharray="3,3"/>
<line x1="704.66" y1="493.5" x2="724.16" y2="474.0" stroke="#808080" stroke-dasharray="3,3"/>
<line x1="735.59" y1="493.5" x2="755.09" y2="474.0" stroke="#808080" stroke-dasharray="3,3"/>
<line x1="766.52" y1="493.5" x2="786.02" y2="474.0" stroke="#808080" stroke-dasharray="3,3"/>
<path d="M333.5,493.5 L797.45,493.5 L816.95,474.0 L816.95,477.0 L797.45,496.5 L333.5,496.5 Z" fill="#A0A0A0" stroke="#000" stroke-width="1"/>
<path d="M333.5,470.75 L353.0,451.95 L693.23,451.95 L673.73,470.75 Z" fill="#00BB00" stroke="#000" stroke-width="1" stroke-linejoin="round"/>
<path d="M673.73,470.75 L693.23,451.95 L693.23,467.45 L673.73,486.25 Z" fill="#007700" stroke="#000" stroke-width="1" stroke-linejoin="round"/>
<rect x="333.5" y="470.75" width="340.23" height="15.5" fill="url(#g0)" stroke="#000" stroke-width="1"/>
<path d="M333.5,447.65 L353.0,428.85 L476.72,428.85 L457.22,447.65 Z" fill="#C02800" stroke="#000" stroke-width="1" stroke-linejoin="round"/>
<path d="M457.22,447.65 L476.72,428.85 L476.72,444.35 L457.22,463.15 Z" fill="#800000" stroke="#000" stroke-width="1" stroke-linejoin="round"/>
<rect x="333.5" y="447.65" width="123.72" height="15.5" fill="url(#g1)" stroke="#000" stroke-width="1"/>
<path d="M333.5,424.55 L353.0,405.75 L816.95,405.75 L797.45,424.55 Z" fill="#0058C0" stroke="#000" stroke-width="1" stroke-linejoin="round"/>
<path d="M797.45,424.55 L816.95,405.75 L816.95,421.25 L797.45,440.05 Z" fill="#001F80" stroke="#000" stroke-width="1" stroke-linejoin="round"/>
<rect x="333.5" y="424.55" width="463.95" height="15.5" fill="url(#g2)" stroke="#000" stroke-width="1"/>
<path d="M333.5,401.45 L353.0,382.65 L383.93,382.65 L364.43,401.45 Z" fill="#C020C0" stroke="#000" stroke-width="1" stroke-linejoin="round"/>
<path d="M364.43,401.45 L383.93,382.65 L383.93,398.15 L364.43,416.95 Z" fill="#800080" stroke="#000" stroke-width="1" stroke-linejoin="round"/>
<rect x="333.5" y="401.45" width="30.93" height="15.5" fill="url(#g3)" stroke="#000" stroke-width="1"/>
<path d="M333.5,378.35 L353.0,359.55 L445.79,359.55 L426.29,378.35 Z" fill="#C020C0" stroke="#000" stroke-width="1" stroke-linejoin="round"/>
<path d="M426.29,378.35 L445.79,359.55 L445.79,375.05 L426.29,393.85 Z" fill="#800080" stroke="#000" stroke-width="1" stroke-linejoin="round"/>
<rect x="333.5" y="378.35" width="92.79" height="15.5" fill="url(#g4)" stroke="#000" stroke-width="1"/>
<line x1="333.5" y1="371" x2="333.5" y2="496.5" stroke="#000" stroke-width="2"/>
<line x1="333.5" y1="496.5" x2="797.45" y2="496.5" stroke="#000" stroke-width="2"/>
<line x1="329" y1="478.50" x2="333.5" y2="478.50" stroke="#000" stroke-width="1"/>
<line x1="331" y1="466.95" x2="333.5" y2="466.95" stroke="#606060" stroke-width="1"/>
<line x1="331" y1="472.73" x2="333.5" y2="472.73" stroke="#606060" stroke-width="1"/>
<line x1="331" y1="484.27" x2="333.5" y2="484.27" stroke="#606060" stroke-width="1"/>
<line x1="331" y1="490.05" x2="333.5" y2="490.05" stroke="#606060" stroke-width="1"/>
<line x1="329" y1="455.40" x2="333.5" y2="455.40" stroke="#000" stroke-width="1"/>
<line x1="331" y1="443.85" x2="333.5" y2="443.85" stroke="#606060" stroke-width="1"/>
<line x1="331" y1="449.62" x2="333.5" y2="449.62" stroke="#606060" stroke-width="1"/>
<line x1="331" y1="461.17" x2="333.5" y2="461.17" stroke="#606060" stroke-width="1"/>
<line x1="331" y1="466.95" x2="333.5" y2="466.95" stroke="#606060" stroke-width="1"/>
<line x1="329" y1="432.30" x2="333.5" y2="432.30" stroke="#000" stroke-width="1"/>
<line x1="331" y1="420.75" x2="333.5" y2="420.75" stroke="#606060" stroke-width="1"/>
<line x1="331" y1="426.53" x2="333.5" y2="426.53" stroke="#606060" stroke-width="1"/>
<line x1="331" y1="438.07" x2="333.5" y2="438.07" stroke="#606060" stroke-width="1"/>
<line x1="331" y1="443.85" x2="333.5" y2="443.85" stroke="#606060" stroke-width="1"/>
<line x1="329" y1="409.20" x2="333.5" y2="409.20" stroke="#000" stroke-width="1"/>
<line x1="331" y1="397.65" x2="333.5" y2="397.65" stroke="#606060" stroke-width="1"/>
<line x1="331" y1="403.43" x2="333.5" y2="403.43" stroke="#606060" stroke-width="1"/>
<line x1="331" y1="414.97" x2="333.5" y2="414.97" stroke="#606060" stroke-width="1"/>
<line x1="331" y1="420.75" x2="333.5" y2="420.75" stroke="#606060" stroke-width="1"/>
<line x1="329" y1="386.10" x2="333.5" y2="386.10" stroke="#000" stroke-width="1"/>
<line x1="331" y1="374.55" x2="333.5" y2="374.55" stroke="#606060" stroke-width="1"/>
<line x1="331" y1="380.33" x2="333.5" y2="380.33" stroke="#606060" stroke-width="1"/>
<line x1="331" y1="391.88" x2="333.5" y2="391.88" stroke="#606060" stroke-width="1"/>
<line x1="331" y1="397.65" x2="333.5" y2="397.65" stroke="#606060" stroke-width="1"/>
<text x="326" y="482.50" font-size="10" text-anchor="end" font-family="Liberation Sans">DB2</text>
<text x="326" y="459.40" font-size="10" text-anchor="end" font-family="Liberation Sans">DL/I</text>
<text x="326" y="436.30" font-size="10" text-anchor="end" font-family="Liberation Sans">Sequential</text>
<text x="326" y="413.20" font-size="10" text-anchor="end" font-family="Liberation Sans">VSAM</text>
<text x="326" y="390.10" font-size="10" text-anchor="end" font-family="Liberation Sans">Other</text>
<line x1="333.50" y1="497.5" x2="333.50" y2="501.5" stroke="#000" stroke-width="1"/>
<line x1="341.23" y1="497.5" x2="341.23" y2="499.5" stroke="#404040" stroke-width="1"/>
<line x1="348.96" y1="497.5" x2="348.96" y2="499.5" stroke="#404040" stroke-width="1"/>
<line x1="356.70" y1="497.5" x2="356.70" y2="499.5" stroke="#404040" stroke-width="1"/>
<text x="333.50" y="513.5" font-size="10" text-anchor="middle" font-family="Liberation Sans">0</text>
<line x1="364.43" y1="497.5" x2="364.43" y2="501.5" stroke="#000" stroke-width="1"/>
<line x1="372.16" y1="497.5" x2="372.16" y2="499.5" stroke="#404040" stroke-width="1"/>
<line x1="379.89" y1="497.5" x2="379.89" y2="499.5" stroke="#404040" stroke-width="1"/>
<line x1="387.63" y1="497.5" x2="387.63" y2="499.5" stroke="#404040" stroke-width="1"/>
<text x="364.43" y="513.5" font-size="10" text-anchor="middle" font-family="Liberation Sans">1</text>
<line x1="395.36" y1="497.5" x2="395.36" y2="501.5" stroke="#000" stroke-width="1"/>
<line x1="403.09" y1="497.5" x2="403.09" y2="499.5" stroke="#404040" stroke-width="1"/>
<line x1="410.82" y1="497.5" x2="410.82" y2="499.5" stroke="#404040" stroke-width="1"/>
<line x1="418.56" y1="497.5" x2="418.56" y2="499.5" stroke="#404040" stroke-width="1"/>
<text x="395.36" y="513.5" font-size="10" text-anchor="middle" font-family="Liberation Sans">2</text>
<line x1="426.29" y1="497.5" x2="426.29" y2="501.5" stroke="#000" stroke-width="1"/>
<line x1="434.02" y1="497.5" x2="434.02" y2="499.5" stroke="#404040" stroke-width="1"/>
<line x1="441.75" y1="497.5" x2="441.75" y2="499.5" stroke="#404040" stroke-width="1"/>
<line x1="449.49" y1="497.5" x2="449.49" y2="499.5" stroke="#404040" stroke-width="1"/>
<text x="426.29" y="513.5" font-size="10" text-anchor="middle" font-family="Liberation Sans">3</text>
<line x1="457.22" y1="497.5" x2="457.22" y2="501.5" stroke="#000" stroke-width="1"/>
<line x1="464.95" y1="497.5" x2="464.95" y2="499.5" stroke="#404040" stroke-width="1"/>
<line x1="472.69" y1="497.5" x2="472.69" y2="499.5" stroke="#404040" stroke-width="1"/>
<line x1="480.42" y1="497.5" x2="480.42" y2="499.5" stroke="#404040" stroke-width="1"/>
<text x="457.22" y="513.5" font-size="10" text-anchor="middle" font-family="Liberation Sans">4</text>
<line x1="488.15" y1="497.5" x2="488.15" y2="501.5" stroke="#000" stroke-width="1"/>
<line x1="495.88" y1="497.5" x2="495.88" y2="499.5" stroke="#404040" stroke-width="1"/>
<line x1="503.61" y1="497.5" x2="503.61" y2="499.5" stroke="#404040" stroke-width="1"/>
<line x1="511.35" y1="497.5" x2="511.35" y2="499.5" stroke="#404040" stroke-width="1"/>
<text x="488.15" y="513.5" font-size="10" text-anchor="middle" font-family="Liberation Sans">5</text>
<line x1="519.08" y1="497.5" x2="519.08" y2="501.5" stroke="#000" stroke-width="1"/>
<line x1="526.81" y1="497.5" x2="526.81" y2="499.5" stroke="#404040" stroke-width="1"/>
<line x1="534.54" y1="497.5" x2="534.54" y2="499.5" stroke="#404040" stroke-width="1"/>
<line x1="542.28" y1="497.5" x2="542.28" y2="499.5" stroke="#404040" stroke-width="1"/>
<text x="519.08" y="513.5" font-size="10" text-anchor="middle" font-family="Liberation Sans">6</text>
<line x1="550.01" y1="497.5" x2="550.01" y2="501.5" stroke="#000" stroke-width="1"/>
<line x1="557.74" y1="497.5" x2="557.74" y2="499.5" stroke="#404040" stroke-width="1"/>
<line x1="565.48" y1="497.5" x2="565.48" y2="499.5" stroke="#404040" stroke-width="1"/>
<line x1="573.21" y1="497.5" x2="573.21" y2="499.5" stroke="#404040" stroke-width="1"/>
<text x="550.01" y="513.5" font-size="10" text-anchor="middle" font-family="Liberation Sans">7</text>
<line x1="580.94" y1="497.5" x2="580.94" y2="501.5" stroke="#000" stroke-width="1"/>
<line x1="588.67" y1="497.5" x2="588.67" y2="499.5" stroke="#404040" stroke-width="1"/>
<line x1="596.41" y1="497.5" x2="596.41" y2="499.5" stroke="#404040" stroke-width="1"/>
<line x1="604.14" y1="497.5" x2="604.14" y2="499.5" stroke="#404040" stroke-width="1"/>
<text x="580.94" y="513.5" font-size="10" text-anchor="middle" font-family="Liberation Sans">8</text>
<line x1="611.87" y1="497.5" x2="611.87" y2="501.5" stroke="#000" stroke-width="1"/>
<line x1="619.60" y1="497.5" x2="619.60" y2="499.5" stroke="#404040" stroke-width="1"/>
<line x1="627.34" y1="497.5" x2="627.34" y2="499.5" stroke="#404040" stroke-width="1"/>
<line x1="635.07" y1="497.5" x2="635.07" y2="499.5" stroke="#404040" stroke-width="1"/>
<text x="611.87" y="513.5" font-size="10" text-anchor="middle" font-family="Liberation Sans">9</text>
<line x1="642.80" y1="497.5" x2="642.80" y2="501.5" stroke="#000" stroke-width="1"/>
<line x1="650.53" y1="497.5" x2="650.53" y2="499.5" stroke="#404040" stroke-width="1"/>
<line x1="658.26" y1="497.5" x2="658.26" y2="499.5" stroke="#404040" stroke-width="1"/>
<line x1="666.00" y1="497.5" x2="666.00" y2="499.5" stroke="#404040" stroke-width="1"/>
<text x="642.80" y="513.5" font-size="10" text-anchor="middle" font-family="Liberation Sans">10</text>
<line x1="673.73" y1="497.5" x2="673.73" y2="501.5" stroke="#000" stroke-width="1"/>
<line x1="681.46" y1="497.5" x2="681.46" y2="499.5" stroke="#404040" stroke-width="1"/>
<line x1="689.20" y1="497.5" x2="689.20" y2="499.5" stroke="#404040" stroke-width="1"/>
<line x1="696.93" y1="497.5" x2="696.93" y2="499.5" stroke="#404040" stroke-width="1"/>
<text x="673.73" y="513.5" font-size="10" text-anchor="middle" font-family="Liberation Sans">11</text>
<line x1="704.66" y1="497.5" x2="704.66" y2="501.5" stroke="#000" stroke-width="1"/>
<line x1="712.39" y1="497.5" x2="712.39" y2="499.5" stroke="#404040" stroke-width="1"/>
<line x1="720.12" y1="497.5" x2="720.12" y2="499.5" stroke="#404040" stroke-width="1"/>
<line x1="727.86" y1="497.5" x2="727.86" y2="499.5" stroke="#404040" stroke-width="1"/>
<text x="704.66" y="513.5" font-size="10" text-anchor="middle" font-family="Liberation Sans">12</text>
<line x1="735.59" y1="497.5" x2="735.59" y2="501.5" stroke="#000" stroke-width="1"/>
<line x1="743.32" y1="497.5" x2="743.32" y2="499.5" stroke="#404040" stroke-width="1"/>
<line x1="751.05" y1="497.5" x2="751.05" y2="499.5" stroke="#404040" stroke-width="1"/>
<line x1="758.79" y1="497.5" x2="758.79" y2="499.5" stroke="#404040" stroke-width="1"/>
<text x="735.59" y="513.5" font-size="10" text-anchor="middle" font-family="Liberation Sans">13</text>
<line x1="766.52" y1="497.5" x2="766.52" y2="501.5" stroke="#000" stroke-width="1"/>
<line x1="774.25" y1="497.5" x2="774.25" y2="499.5" stroke="#404040" stroke-width="1"/>
<line x1="781.99" y1="497.5" x2="781.99" y2="499.5" stroke="#404040" stroke-width="1"/>
<line x1="789.72" y1="497.5" x2="789.72" y2="499.5" stroke="#404040" stroke-width="1"/>
<text x="766.52" y="513.5" font-size="10" text-anchor="middle" font-family="Liberation Sans">14</text>
<line x1="797.45" y1="497.5" x2="797.45" y2="501.5" stroke="#000" stroke-width="1"/>
<text x="797.45" y="513.5" font-size="10" text-anchor="middle" font-family="Liberation Sans">15</text>
<rect x="836.5" y="362.5" width="82" height="68" fill="#fff" stroke="#000" stroke-width="1"/>
<line x1="919.5" y1="364" x2="919.5" y2="431.5" stroke="#808080"/><line x1="838" y1="431.5" x2="919.5" y2="431.5" stroke="#808080"/>
<rect x="841.5" y="365.50" width="9" height="9" fill="#33FF33" stroke="#000" stroke-width="1"/>
<text x="854" y="374.00" font-size="10" font-family="Liberation Sans" xml:space="preserve">11 DB2</text>
<rect x="841.5" y="378.90" width="9" height="9" fill="#FF6600" stroke="#000" stroke-width="1"/>
<text x="854" y="387.40" font-size="10" font-family="Liberation Sans" xml:space="preserve">  4 DL/I</text>
<rect x="841.5" y="392.30" width="9" height="9" fill="#3399FF" stroke="#000" stroke-width="1"/>
<text x="854" y="400.80" font-size="10" font-family="Liberation Sans" xml:space="preserve">15 Sequential</text>
<rect x="841.5" y="405.70" width="9" height="9" fill="#FF66FF" stroke="#000" stroke-width="1"/>
<text x="854" y="414.20" font-size="10" font-family="Liberation Sans" xml:space="preserve">  1 VSAM</text>
<rect x="841.5" y="419.10" width="9" height="9" fill="#FF66FF" stroke="#000" stroke-width="1"/>
<text x="854" y="427.60" font-size="10" font-family="Liberation Sans" xml:space="preserve">  3 Other</text></svg>
</body></html>
